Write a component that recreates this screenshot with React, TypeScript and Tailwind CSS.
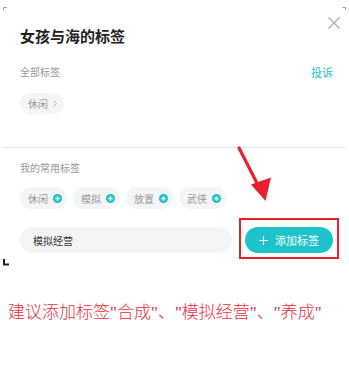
import React from 'react';

const myTags = ['休闲', '模拟', '放置', '武侠'];

function PlusDot() {
  return (
    <svg width="9" height="9" viewBox="0 0 9 9" className="shrink-0">
      <circle cx="4.5" cy="4.5" r="4.5" fill="#1dc2cb" />
      <path d="M4.5 2.3v4.4M2.3 4.5h4.4" stroke="#fff" strokeWidth="1.3" />
    </svg>
  );
}

export default function App() {
  return (
    <div
      className="relative w-[349px] h-[366px] bg-white overflow-hidden"
      style={{ fontFamily: '"Noto Sans CJK SC", "Noto Sans", sans-serif' }}
    >
      {/* header */}
      <div className="flex items-start justify-between pl-5 pr-[9px] pt-[17px]">
        <h1 className="mt-[9px] text-[15px] leading-[20px] font-bold text-[#222]">女孩与海的标签</h1>
        <button className="w-[12px] h-[12px]">
          <svg width="12" height="12" viewBox="0 0 12 12">
            <path d="M0.5 0.5l11 11M11.5 0.5l-11 11" stroke="#aaa" strokeWidth="1.1" />
          </svg>
        </button>
      </div>

      <div className="pl-5 pr-4">
        <div className="mt-[19px] flex items-center justify-between">
          <span className="text-[10px] leading-[14px] text-[#999]">全部标签</span>
          <span className="text-[11px] leading-[14px] text-[#1dc2cb]">投诉</span>
        </div>

        <div className="mt-[14px] flex">
          <span className="h-[21px] pl-2 pr-[7px] rounded-full bg-[#f4f5f7] flex items-center gap-[5px] text-[10px] text-[#999]">
            休闲
            <svg width="4" height="7" viewBox="0 0 4 7">
              <path d="M0.5 0.5l3 3-3 3" fill="none" stroke="#aaa" strokeWidth="0.9" />
            </svg>
          </span>
        </div>
      </div>

      <div className="mt-[33px] mx-[3px] h-px bg-[#e6e6e6]" />

      <div className="pl-5 pr-4">
        <div className="mt-[13px] text-[10px] leading-[14px] text-[#999]">我的常用标签</div>

        <div className="mt-[12px] flex gap-[6px]">
          {myTags.map((t) => (
            <span
              key={t}
              className="h-[22px] w-[47px] pl-2 rounded-full bg-[#f4f5f7] flex items-center gap-[5px] text-[10px] text-[#999]"
            >
              {t}
              <PlusDot />
            </span>
          ))}
        </div>

        <div className="mt-[18px] flex gap-[13px]">
          <div className="w-[212px] h-[26px] shrink-0 rounded-full bg-[#f4f5f7] flex items-center pl-[13px] text-[10px] text-[#333]">
            模拟经营
          </div>
          <div className="relative shrink-0">
            <button className="w-[88px] h-[26px] rounded-full bg-[#1cc3ca] flex items-center justify-center gap-[7px] text-white text-[11px]">
              <svg width="9" height="9" viewBox="0 0 9 9">
                <path d="M4.5 0v9M0 4.5h9" stroke="#fff" strokeWidth="1.1" />
              </svg>
              添加标签
            </button>
            <div className="absolute -left-[6px] -top-[9px] -right-[6px] -bottom-[6px] border-2 border-[#e8202a]" />
          </div>
        </div>
      </div>

      {/* annotation overlay: crop marks and red arrow */}
      <svg className="absolute left-0 top-0 pointer-events-none" width="349" height="366" viewBox="0 0 349 366">
        <path d="M3.5 10V7.5H6.5" fill="none" stroke="#999" strokeWidth="1" />
        <path d="M345.5 10V7.5H342.5" fill="none" stroke="#999" strokeWidth="1" />
        <path d="M4 259V264.5H9" fill="none" stroke="#222" strokeWidth="2" />
        <path d="M239 148L260 189" stroke="#e8202a" strokeWidth="3.2" strokeLinecap="round" />
        <path d="M265.5 201L251 184.5L271 177.5Z" fill="#e8202a" />
      </svg>

      <div
        className="mt-[50px] pl-2 text-[17px] leading-[20px] font-light text-[#ee2b3c] whitespace-nowrap"
        style={{ fontFamily: '"Liberation Serif", "Noto Sans CJK SC", serif' }}
      >
        建议添加标签"合成"、"模拟经营"、"养成"
      </div>
    </div>
  );
}
